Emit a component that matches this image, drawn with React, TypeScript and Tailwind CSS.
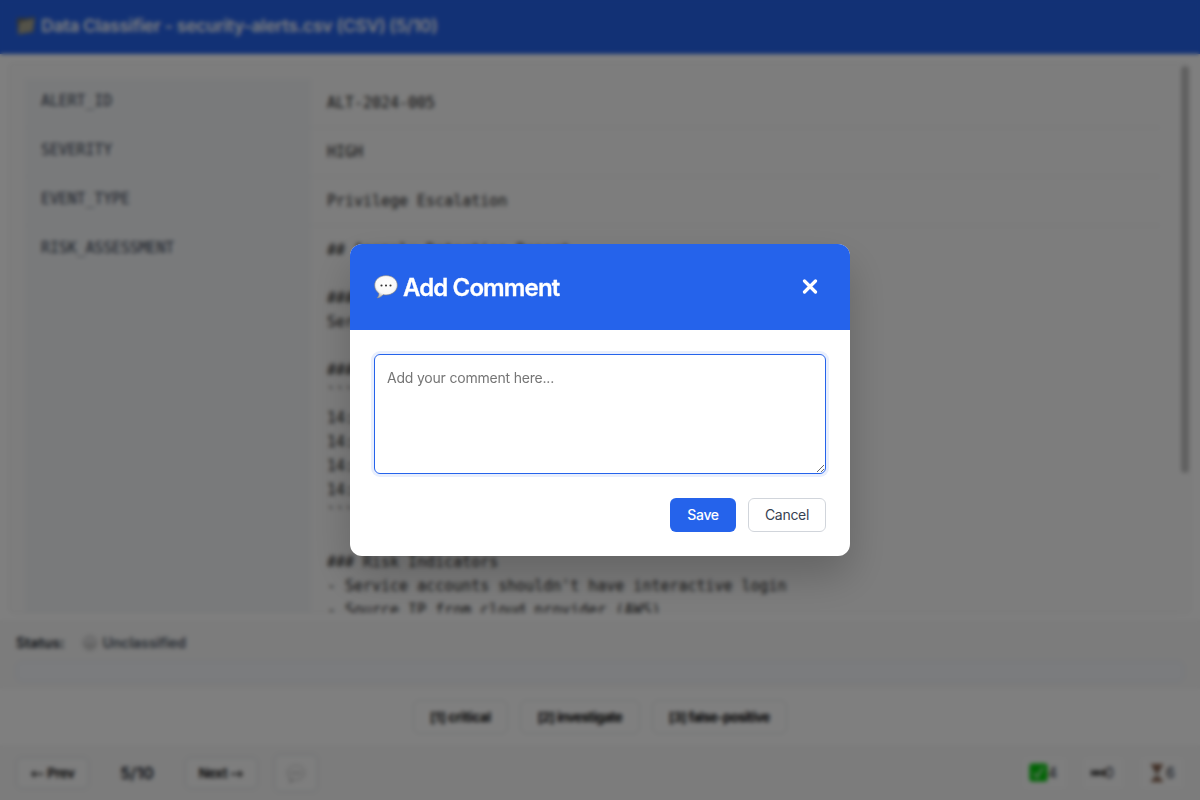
import type { ReactNode } from "react";

const riskLines = [
  "## Anomaly Detection Report",
  "",
  "### Summary",
  "Service account escalated to admin",
  "",
  "### Timeline",
  "```",
  "14:20 - Interactive login",
  "14:21 - Role change",
  "14:22 - Policy attached",
  "14:23 - Alert raised",
  "```",
  "",
  "### Risk Indicators",
  "- Service accounts shouldn't have interactive login",
  "- Source IP from cloud provider (AWS)",
];

const rows = [
  { name: "ALERT_ID", lines: ["ALT-2024-005"] },
  { name: "SEVERITY", lines: ["HIGH"] },
  { name: "EVENT_TYPE", lines: ["Privilege Escalation"] },
  { name: "RISK_ASSESSMENT", lines: riskLines },
];

function SpeechBubble({ className }: { className: string }) {
  return (
    <svg viewBox="0 0 24 24" className={className} aria-hidden="true">
      <defs>
        <radialGradient id="bubble" cx="50%" cy="38%" r="60%">
          <stop offset="0" stopColor="#ffffff" />
          <stop offset="0.72" stopColor="#f8f8f8" />
          <stop offset="1" stopColor="#bcbcbc" />
        </radialGradient>
      </defs>
      <path
        d="M12 .6C5.600.6.6 4.800.6 10.300c0 3.500 1.700 6.200 4.300 8.100.1 2-.6 3.200-1.900 4.500 2.600-.2 4.600-1.300 6-3.200 1 .2 2 .3 3 .3 6.400 0 11.400-4.200 11.400-9.700S18.400.6 12 .6Z"
        fill="url(#bubble)"
        stroke="#808080"
        strokeWidth=".6"
      />
      <circle cx="7.500" cy="10.500" r="1.050" fill="#333" />
      <circle cx="12" cy="10.500" r="1.050" fill="#333" />
      <circle cx="16.500" cy="10.500" r="1.050" fill="#333" />
    </svg>
  );
}

function Folder() {
  return (
    <svg viewBox="0 0 20 20" className="h-5 w-5" aria-hidden="true">
      <path d="M1 3 2 2l6 0 1 .5L19 1l-1.500 15L2 18.500Z" fill="#66665c" />
      <path d="M3.500 6 18.500 2.500l-2 13L2 18Z" fill="#a9a793" />
    </svg>
  );
}

function Circle() {
  return (
    <svg viewBox="0 0 18 18" className="h-[18px] w-[18px]" aria-hidden="true">
      <circle cx="9" cy="9" r="7.500" fill="#e0e0e1" stroke="#cfcfcf" strokeWidth="1" />
      <path d="M3 9a6 6 0 0 0 12 0Z" fill="#cacaca" />
    </svg>
  );
}

function Check() {
  return (
    <svg viewBox="0 0 20 20" className="h-[19px] w-[19px]" aria-hidden="true">
      <rect x=".5" y=".5" width="19" height="19" rx="3" fill="#04c80b" />
      <path d="m5 10.500 3.500 4.500L15 4.500" fill="none" stroke="#d8f5d8" strokeWidth="1.800" />
    </svg>
  );
}

function Skip() {
  return (
    <svg viewBox="0 0 14 8" className="h-2 w-[14px]" aria-hidden="true">
      <path d="M0 1l5 3-5 3ZM5 1l6 3-6 3ZM11.500 1h2v6h-2Z" fill="#333" stroke="#333" />
    </svg>
  );
}

function Hourglass() {
  return (
    <svg viewBox="0 0 14 20" className="h-5 w-[14px]" aria-hidden="true">
      <path d="M2 2h10c0 5-3 6-3 8s3 3 3 8H2c0-5 3-6 3-8S2 7 2 2Z" fill="#d8d5d0" />
      <path d="M2.500 3h9c-.5 4-2.500 5-4.500 8-2-3-4-4-4.500-8ZM3 17c1-3 3-3 4-4 1 1 3 1 4 4Z" fill="#806050" />
      <path d="M1 1h12v2H1ZM1 17h12v2H1Z" fill="#8a6048" />
    </svg>
  );
}

function ArrowLine({ className }: { className: string }) {
  return (
    <svg viewBox="0 0 14 10" className={`h-[10px] w-[14px] ${className}`} aria-hidden="true">
      <path d="M13.500 5H2M5 2 2 5l3 3" fill="none" stroke="#222" strokeWidth="1.400" />
    </svg>
  );
}

function Stat({ children, className }: { children: ReactNode; className: string }) {
  return (
    <div className={`flex h-8 items-center rounded bg-[#fcfcfc] text-sm text-[#1f2937] ${className}`}>
      {children}
    </div>
  );
}

const navButton =
  "flex h-8 items-center justify-center gap-[3px] rounded-md border border-[#dbe0e2] bg-[#fcfcfc] pt-[2px] text-[13px] font-semibold text-black";

const labelButton = "h-[34px] rounded-md border border-[#dfe5e5] pt-[2px]";

export default function App() {
  return (
    <div className="relative h-[800px] w-[1200px] overflow-hidden bg-white font-['Inter',sans-serif] text-[#111827]">
      <div className="flex h-full flex-col">
        <header className="flex h-[54px] shrink-0 items-center gap-[5px] bg-[#2563eb] pb-[2px] pl-4 text-white">
          <Folder />
          <h1 className="text-[17.5px] font-semibold tracking-[-0.26px]">Data Classifier - security-alerts.csv (CSV) (5/10)</h1>
        </header>

        <main className="mx-2 mt-2 flex h-[552px] shrink-0 overflow-hidden rounded-md border border-[#f0f0f0] bg-[#fafafa] pl-4 pt-4">
          <div className="w-[1134px] shrink-0 font-['DejaVu_Sans_Mono',monospace]">
            {rows.map((row) => (
              <div key={row.name} className="flex border-b border-[#edf0f2]">
                <div className="w-[286px] shrink-0 bg-[#f3f5f7] px-4 pt-3 text-[15px] leading-[21px] tracking-[-0.15px] text-[#374151]">
                  {row.name}
                </div>
                <div className="whitespace-pre px-4 py-3 text-[15px] leading-6 tracking-[-0.02px] text-[#1f1f1f]">
                  {row.lines.map((line, index) => (
                    <div key={index} className="h-6">{line}</div>
                  ))}
                </div>
              </div>
            ))}
          </div>
          <div className="-mt-4 ml-[18px] flex w-[15px] shrink-0 justify-center bg-[#fbfbfb] pt-[3px]">
            <div className="h-[407px] w-[8px] rounded-full bg-[#c1c1c1]" />
          </div>
        </main>

        <section className="mt-[6px] h-[69px] shrink-0 bg-[#f8f8f8] px-4">
          <div className="flex h-[41px] items-center pt-[5px] text-sm font-semibold">
            <span className="tracking-[0.1px]">Status:</span>
            <span className="ml-4 flex items-center gap-1 font-semibold tracking-[-0.05px] text-[#4b5563]">
              <Circle />
              Unclassified
            </span>
          </div>
          <div className="h-[21px] rounded-md border border-[#eaeff8] bg-[#f6f8fc]" />
        </section>

        <section className="flex h-[56px] shrink-0 items-center justify-center gap-3 text-[13px] font-bold tracking-[-0.45px] text-black">
          <button className={`${labelButton} w-[95px] tracking-[-0.15px]`}>[1] critical</button>
          <button className={`${labelButton} w-[120px]`}>[2] investigate</button>
          <button className={`${labelButton} w-[135px]`}>[3] false-positive</button>
        </section>

        <footer className="flex h-[55px] items-center bg-[#f8f8f8] px-4">
          <button className={`${navButton} w-[73px]`}>
            <ArrowLine className="" />
            <span className="tracking-[-0.2px]">Prev</span>
          </button>
          <span className="w-[96px] text-center text-base font-semibold">5/10</span>
          <button className={`${navButton} w-[73px]`}>
            <span className="tracking-[-0.2px]">Next</span>
            <ArrowLine className="rotate-180" />
          </button>
          <button className="ml-4 flex h-[38px] w-[44px] items-center justify-center rounded-md border border-[#dbe0e2] bg-[#fcfcfc] pt-[2px]">
            <SpeechBubble className="h-[18px] w-[18px]" />
          </button>
          <div className="ml-auto flex gap-4">
            <Stat className="w-[44px] pl-[6px]"><Check />4</Stat>
            <Stat className="w-[41px] pl-[8px]"><Skip />0</Stat>
            <Stat className="w-[44px] gap-[2px] pl-[10px]"><Hourglass />6</Stat>
          </div>
        </footer>
      </div>

      <div className="absolute inset-0 flex items-center justify-center bg-black/50 backdrop-blur-[2px]">
        <div role="dialog" className="flex h-[312px] w-[500px] flex-col overflow-hidden rounded-xl bg-white shadow-[0_20px_40px_rgba(0,0,0,0.2)]">
          <div className="flex h-[86px] shrink-0 items-center bg-[#2563eb] px-6 text-white">
            <SpeechBubble className="h-6 w-6" />
            <h2 className="ml-[5px] pt-[2px] text-2xl font-semibold tracking-[-0.88px] [-webkit-text-stroke:0.3px_white]">Add Comment</h2>
            <button className="ml-auto flex h-8 w-8 items-center justify-center" aria-label="Close">
              <svg viewBox="0 0 16 16" className="h-4 w-4" aria-hidden="true">
                <path d="m2.500 2 11 11m0-11-11 11" stroke="white" strokeWidth="3.200" strokeLinecap="round" />
              </svg>
            </button>
          </div>
          <div className="p-6">
            <textarea
              placeholder="Add your comment here..."
              className="block h-[120px] w-full resize-y rounded-md border border-[#2563eb] p-3 text-sm leading-[22px] tracking-[-0.2px] shadow-[0_0_0_3px_rgba(37,99,235,0.1)] outline-none placeholder:text-[#757575]"
            />
            <div className="mt-6 flex justify-end gap-3 text-sm tracking-[-0.3px]">
              <button className="h-[34px] w-[66px] rounded-md bg-[#2563eb] font-medium text-white">Save</button>
              <button className="h-[34px] w-[78px] rounded-md border border-[#d1d5db] bg-white text-[#374151]">Cancel</button>
            </div>
          </div>
        </div>
      </div>
    </div>
  );
}
